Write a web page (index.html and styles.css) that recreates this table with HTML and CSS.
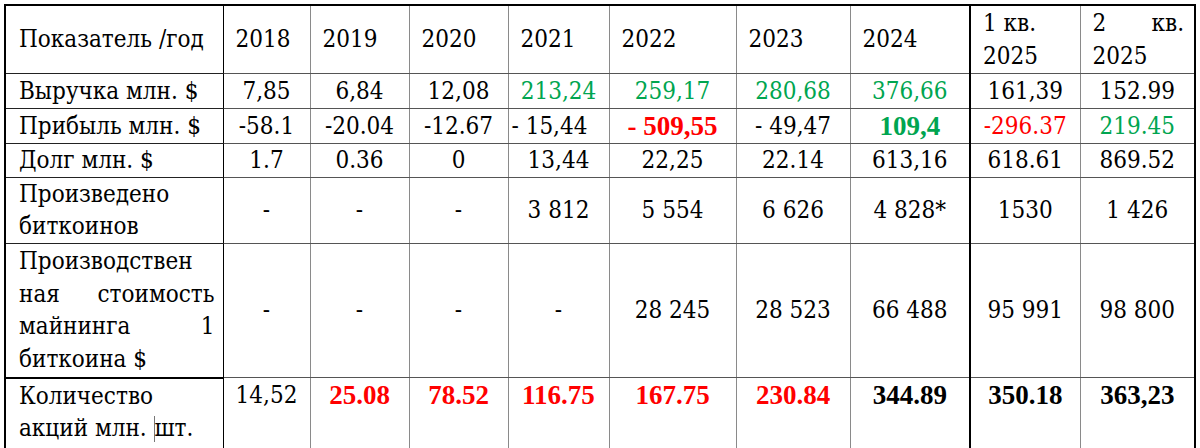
FILE: index.html
```html
<!DOCTYPE html>
<html lang="ru">
<head>
<meta charset="utf-8">
<title>Показатели</title>
<link rel="stylesheet" href="styles.css">
</head>
<body>
<table class="data">
  <colgroup>
    <col class="c-label">
    <col class="c-2018">
    <col class="c-2019">
    <col class="c-2020">
    <col class="c-2021">
    <col class="c-2022">
    <col class="c-2023">
    <col class="c-2024">
    <col class="c-q1">
    <col class="c-q2">
  </colgroup>
  <tr class="r-head">
    <td class="label">Показатель /год</td>
    <td class="year">2018</td>
    <td class="year">2019</td>
    <td class="year">2020</td>
    <td class="year">2021</td>
    <td class="year">2022</td>
    <td class="year">2023</td>
    <td class="year">2024</td>
    <td class="year q1">1 кв. 2025</td>
    <td class="year justify">2 кв. 2025</td>
  </tr>
  <tr class="r-one">
    <td class="label">Выручка млн. $</td>
    <td>7,85</td>
    <td>6,84</td>
    <td>12,08</td>
    <td class="green">213,24</td>
    <td class="green">259,17</td>
    <td class="green">280,68</td>
    <td class="green">376,66</td>
    <td class="q1">161,39</td>
    <td>152.99</td>
  </tr>
  <tr class="r-one">
    <td class="label">Прибыль млн. $</td>
    <td>-58.1</td>
    <td>-20.04</td>
    <td>-12.67</td>
    <td class="left">- 15,44</td>
    <td class="red bold">- 509,55</td>
    <td>- 49,47</td>
    <td class="green bold">109,4</td>
    <td class="q1 red">-296.37</td>
    <td class="green">219.45</td>
  </tr>
  <tr class="r-debt">
    <td class="label">Долг млн. $</td>
    <td>1.7</td>
    <td>0.36</td>
    <td>0</td>
    <td>13,44</td>
    <td>22,25</td>
    <td>22.14</td>
    <td>613,16</td>
    <td class="q1">618.61</td>
    <td>869.52</td>
  </tr>
  <tr class="r-two">
    <td class="label">Произведено биткоинов</td>
    <td>-</td>
    <td>-</td>
    <td>-</td>
    <td>3 812</td>
    <td>5 554</td>
    <td>6 626</td>
    <td>4 828*</td>
    <td class="q1">1530</td>
    <td>1 426</td>
  </tr>
  <tr class="r-four">
    <td class="label justify">Производствен ная стоимость майнинга 1 биткоина $</td>
    <td>-</td>
    <td>-</td>
    <td>-</td>
    <td>-</td>
    <td>28 245</td>
    <td>28 523</td>
    <td>66 488</td>
    <td class="q1">95 991</td>
    <td>98 800</td>
  </tr>
  <tr class="r-shares">
    <td class="label">Количество акций млн. <span class="caret"></span>шт.</td>
    <td>14,52</td>
    <td class="red bold">25.08</td>
    <td class="red bold">78.52</td>
    <td class="red bold">116.75</td>
    <td class="red bold">167.75</td>
    <td class="red bold">230.84</td>
    <td class="bold">344.89</td>
    <td class="q1 bold">350.18</td>
    <td class="bold">363,23</td>
  </tr>
</table>
</body>
</html>
```
FILE: styles.css
```css
html, body {
  margin: 0;
  background: #ffffff;
}
body {
  padding: 4px 0 0 4px;
}
.data {
  border-collapse: collapse;
  table-layout: fixed;
  width: 1190px;
  font-family: "DejaVu Serif Condensed", "DejaVu Serif", serif;
  font-stretch: condensed;
  font-size: 24px;
  font-weight: 400;
  line-height: 32.5px;
  color: #000;
  border: 2px solid #000;
}
.c-label { width: 218px; }
.c-2018 { width: 87px; }
.c-2019 { width: 99px; }
.c-2020 { width: 99px; }
.c-2021 { width: 101px; }
.c-2022 { width: 127px; }
.c-2023 { width: 114px; }
.c-2024 { width: 120px; }
.c-q1 { width: 110px; }
.c-q2 { width: 115px; }

.data td {
  border-left: 1px solid #8a8a8a;
  border-right: 1px solid #8a8a8a;
  border-top: 1px solid #555;
  border-bottom: 1px solid #555;
  padding: 0 10px;
  text-align: center;
  vertical-align: middle;
  white-space: normal;
}
.data td.label {
  text-align: left;
  padding-left: 13px;
  padding-right: 8px;
  border-right: 1px solid #000;
  border-top-color: #222;
  border-bottom-color: #222;
}
.data td.year {
  text-align: left;
  padding-left: 12px;
}
.data td.justify {
  text-align: justify;
  text-align-last: left;
}
.data td.year.justify {
  padding-right: 10px;
}
.data td.q1 {
  border-left: 2px solid #000;
}
.data td.left {
  text-align: left;
  padding-left: 3px;
}
.r-head td { height: 67px; }
.r-one td { height: 34px; }
.r-debt td { height: 32px; }
.r-two td { height: 65px; }
.r-four td { height: 133px; }
.r-shares td {
  height: 68px;
  vertical-align: top;
  padding-top: 1px;
}
.r-shares td.label {
  border-top: 2px solid #000;
}
.green { color: #00a550; }
.red { color: #ff0000; }
.bold {
  font-weight: bold;
  font-family: "Liberation Serif", serif;
  font-stretch: normal;
  font-size: 27px;
}
.caret {
  display: inline-block;
  width: 0;
  height: 26px;
  border-left: 1px solid #777;
  vertical-align: -6px;
}
```
